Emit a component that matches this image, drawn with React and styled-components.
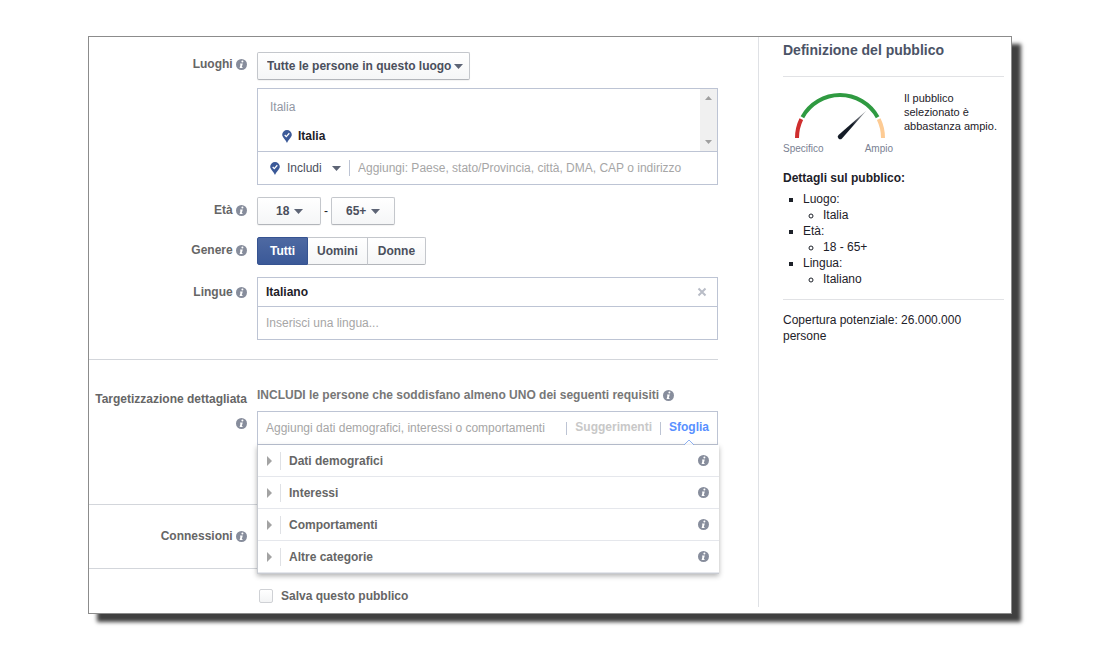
import React, { useState } from 'react';
import styled, { createGlobalStyle, css } from 'styled-components';

const GlobalStyle = createGlobalStyle`
  * {
    box-sizing: border-box;
  }
  body {
    margin: 0;
    background: #fff;
    color: #1d2129;
    font-family: "Liberation Sans", Arial, sans-serif;
    font-size: 12px;
    line-height: 16px;
  }
  button, input, select {
    font-family: inherit;
    font-size: 12px;
  }
  svg {
    display: block;
  }
`;

const Page = styled.div`
  padding: 36px 88px;
`;

const Panel = styled.div`
  display: flex;
  border: 1px solid #8c8c8c;
  background: #fff;
  box-shadow: 9px 8px 4px #404040;
`;

const Main = styled.form`
  flex: 1;
  min-width: 0;
  margin-right: 40px;
`;

const Section = styled.section`
  display: flex;
  flex-direction: column;
  gap: 12px;
  padding: ${p => p.$pad};
  border-bottom: ${p => (p.$last ? 'none' : '1px solid #d3d6db')};
`;

const Row = styled.div`
  display: grid;
  grid-template-columns: 158px minmax(0, 1fr);
  column-gap: 10px;
  align-items: start;
`;

const RowLabel = styled.label`
  padding-top: ${p => p.$top || 0}px;
  color: #666;
  font-weight: bold;
  line-height: 24px;
  text-align: right;

  svg {
    display: inline-block;
    vertical-align: -2px;
  }
`;

const Stack = styled.div`
  display: flex;
  flex-direction: column;
  align-items: flex-start;
  gap: 8px;
`;

const Inline = styled.div`
  display: flex;
  align-items: center;
  gap: 3px;
`;

const raised = css`
  height: 28px;
  border: 1px solid #c4c7cc;
  border-bottom-color: #b2b5ba;
  background: linear-gradient(#fff, #f5f6f7);
  color: #4b4f5c;
  font-weight: bold;
`;

const SelectWrap = styled.div`
  display: inline-grid;
  align-items: center;
  color: #5d6475;

  > * {
    grid-area: 1 / 1;
  }
  svg {
    justify-self: end;
    margin-right: ${p => p.$arrow}px;
    pointer-events: none;
  }
`;

const Select = styled.select`
  ${raised}
  width: ${p => p.$width}px;
  padding: 0 ${p => p.$pad}px;
  border-radius: 2px;
  appearance: none;
  box-shadow: 0 1px 1px rgba(0, 0, 0, 0.05);
`;

const Segments = styled.div`
  display: flex;
`;

const Segment = styled.button`
  ${raised}
  padding: 0 9px;
  border-left-width: 0;

  &:first-child {
    padding: 0 12px;
    border-radius: 2px 0 0 2px;
    border-left-width: 1px;
  }
  &:last-child {
    padding: 0 10px;
    border-radius: 0 2px 2px 0;
  }
  ${p => p.$on && css`
    border-color: #365391;
    background: linear-gradient(#4e69a2, #3b5998);
    color: #fff;
  `}
`;

const Box = styled.div`
  position: relative;
  width: 100%;
  border: 1px solid #bdc4d4;
  background: #fff;
`;

const PlaceList = styled.div`
  display: flex;
  justify-content: space-between;
  height: 62px;
`;

const Places = styled.div`
  padding: 10px 12px;
  color: #9197a3;
`;

const Place = styled.div`
  display: flex;
  align-items: center;
  gap: 6px;
  margin: 13px 0 0 12px;
  color: #1d2129;
  font-weight: bold;
`;

const ScrollBar = styled.div`
  display: flex;
  flex-direction: column;
  justify-content: space-between;
  width: 17px;
  background: #f0f0f0;
`;

const ScrollButton = styled.button`
  display: flex;
  align-items: center;
  justify-content: center;
  height: 18px;
  padding: 0;
  border: 0;
  background: none;
  color: #a0a0a0;
`;

const InputRow = styled.div`
  display: flex;
  align-items: center;
  height: ${p => (p.$divided ? 33 : 32)}px;
  padding: 0 8px;
  border-top: ${p => (p.$divided ? '1px solid #bdc4d4' : 'none')};
`;

const TextInput = styled.input`
  flex: 1;
  min-width: 0;
  height: 24px;
  padding: 0;
  border: 0;
  outline: 0;
  background: none;
  color: #1d2129;

  &::placeholder {
    color: #a6a6a6;
    opacity: 1;
  }
`;

const PinSlot = styled.span`
  margin-left: 4px;
`;

const IncludeWrap = styled(SelectWrap)`
  margin-left: 7px;

  svg {
    margin: 0;
  }
`;

const IncludeSelect = styled.select`
  width: 54px;
  padding: 0;
  border: 0;
  background: none;
  color: #4b4f5c;
  appearance: none;
`;

const Separator = styled.span`
  flex: none;
  width: 1px;
  height: ${p => p.$height || 13}px;
  margin: 0 8px;
  background: ${p => p.$color || '#bdc4d4'};
`;

const Token = styled.div`
  display: flex;
  align-items: center;
  justify-content: space-between;
  height: 28px;
  padding: 0 10px 0 8px;
  font-weight: bold;
`;

const IconButton = styled.button`
  padding: 0;
  border: 0;
  background: none;
  color: #b9bdc7;
`;

const Hint = styled.div`
  display: flex;
  align-items: center;
  gap: 4px;
  color: #777;
  font-weight: bold;
`;

const TabLink = styled.a`
  position: relative;
  padding-bottom: 2px;
  color: ${p => (p.$on ? '#5890ff' : '#c8c8c8')};
  font-weight: bold;
  text-decoration: none;

  svg {
    position: absolute;
    top: 20px;
    left: 50%;
    margin-left: -6px;
  }
`;

/* opens over the sections below the search box */
const Menu = styled.ul`
  position: absolute;
  z-index: 1;
  top: calc(100% + 1px);
  left: -1px;
  right: -2px;
  margin: 0;
  padding: 0;
  list-style: none;
  border: 1px solid #c8cbd1;
  border-width: 0 0 1px 1px;
  background: #fff;
  box-shadow: 0 2px 5px rgba(0, 0, 0, 0.3);
`;

const MenuItem = styled.li`
  display: flex;
  align-items: center;
  height: 32px;
  padding: 0 10px 0 9px;
  border-bottom: 1px solid #e5e7ec;
  color: #666;
  font-weight: bold;

  > svg:first-child {
    color: #a3a3a3;
  }
  > svg:last-child {
    margin-left: auto;
  }
`;

const SaveLabel = styled.label`
  display: flex;
  align-items: center;
  gap: 8px;
  margin-left: 170px;
  color: #666;
  font-weight: bold;
`;

const Check = styled.input`
  appearance: none;
  width: 14px;
  height: 14px;
  margin: 0;
  border: 1px solid #cfd1d5;
  border-radius: 2px;
  background: linear-gradient(#fff, #f3f4f5);

  &:checked {
    background: #4e69a2;
  }
`;

const Side = styled.aside`
  width: 253px;
  margin-bottom: 6px;
  padding: 4px 7px 0 24px;
  border-left: 1px solid #dfe1e5;
`;

const SideTitle = styled.h2`
  margin: 0;
  padding-bottom: 17px;
  border-bottom: 1px solid #e1e2e5;
  color: #4b5366;
  font-size: 14px;
  line-height: 18px;
`;

const Meter = styled.div`
  display: flex;
  align-items: flex-start;
  gap: 11px;
  padding: 14px 0 13px;
`;

const GaugeBox = styled.div`
  flex: none;
  width: 110px;

  svg {
    margin-left: 12px;
  }
`;

const GaugeEnds = styled.div`
  display: flex;
  justify-content: space-between;
  color: #7a8193;
  font-size: 10px;
  line-height: 16px;
`;

const MeterText = styled.p`
  margin: 0;
  font-size: 11px;
  line-height: 14px;
`;

const Details = styled.div`
  padding-bottom: 12px;
  border-bottom: 1px solid #e1e2e5;

  h3 {
    margin: 0 0 5px;
    font-size: 12px;
  }
  ul {
    margin: 0;
    padding-left: 20px;
    list-style: square;
  }
  ul ul {
    list-style: circle;
  }
`;

const Reach = styled.p`
  margin: 12px 0 0;
`;

const Info = () => (
  <svg width="11" height="11" viewBox="0 0 11 11" aria-hidden="true">
    <circle cx="5.5" cy="5.5" r="5.5" fill="#878d9c" />
    <circle cx="6.4" cy="2.5" r="1" fill="#fff" />
    <path d="M4.2 4.6h2.600L5.800 8h.8l-.2.900H3.600L4.500 5.500H4z" fill="#fff" />
  </svg>
);

const Pin = () => (
  <svg width="10" height="13" viewBox="0 0 10 13" aria-hidden="true">
    <path d="M5 0a4.800 4.800 0 0 1 4.800 4.800C9.800 7.300 6.500 9.500 5 13 3.500 9.500.2 7.300.2 4.800A4.800 4.800 0 0 1 5 0z" fill="#3b5998" />
    <path d="M2.700 5l1.600 1.600 3-3.300" fill="none" stroke="#fff" strokeWidth="1.3" />
  </svg>
);

const Down = () => (
  <svg width="9" height="5" viewBox="0 0 9 5" aria-hidden="true">
    <path d="M0 0h9L4.500 5z" fill="currentColor" />
  </svg>
);

const ScrollArrow = ({ up }) => (
  <svg width="7" height="4" viewBox="0 0 7 4" aria-hidden="true">
    <path d={up ? 'M0 4h7L3.500 0z' : 'M0 0h7L3.500 4z'} fill="currentColor" />
  </svg>
);

const Right = () => (
  <svg width="5" height="10" viewBox="0 0 5 10" aria-hidden="true">
    <path d="M0 0l5 5-5 5z" fill="currentColor" />
  </svg>
);

const Gauge = () => (
  <svg width="90" height="50" viewBox="0 -2 90 50" aria-hidden="true">
    <defs>
      <linearGradient id="needle" x1="0" y1="1" x2="1" y2="0">
        <stop offset="0.5" stopColor="#141b26" />
        <stop offset="1" stopColor="#141b26" stopOpacity="0.3" />
      </linearGradient>
    </defs>
    <g fill="none" strokeWidth="4">
      <path d="M2 45A43 43 0 0 1 6.300 26.200" stroke="#cf2e2e" />
      <path d="M7.400 24.200A43 43 0 0 1 82.600 24.200" stroke="#2f9a41" />
      <path d="M83.700 26.200A43 43 0 0 1 88 45" stroke="#fdcb94" />
    </g>
    <path d="M43.500 42L71.500 17.500 47 45.500a2.300 2.300 0 0 1-3.500-3.500z" fill="url(#needle)" />
  </svg>
);

const categories = ['Dati demografici', 'Interessi', 'Comportamenti', 'Altre categorie'];
const genders = ['Tutti', 'Uomini', 'Donne'];

export default function App() {
  const [gender, setGender] = useState('Tutti');

  return (
    <Page>
      <GlobalStyle />
      <Panel>
        <Main>
          <Section $pad="15px 0 19px">
            <Row>
              <RowLabel htmlFor="places">Luoghi <Info /></RowLabel>
              <Stack>
                <SelectWrap $arrow={7}>
                  <Select id="places" $width={213} $pad={9}>
                    <option>Tutte le persone in questo luogo</option>
                  </Select>
                  <Down />
                </SelectWrap>
                <Box>
                  <PlaceList>
                    <Places>
                      Italia
                      <Place><Pin />Italia</Place>
                    </Places>
                    <ScrollBar>
                      <ScrollButton type="button" aria-label="Su"><ScrollArrow up /></ScrollButton>
                      <ScrollButton type="button" aria-label="Giù"><ScrollArrow /></ScrollButton>
                    </ScrollBar>
                  </PlaceList>
                  <InputRow $divided>
                    <PinSlot><Pin /></PinSlot>
                    <IncludeWrap>
                      <IncludeSelect aria-label="Includi o escludi">
                        <option>Includi</option>
                      </IncludeSelect>
                      <Down />
                    </IncludeWrap>
                    <Separator $height={16} />
                    <TextInput
                      aria-label="Aggiungi luogo"
                      placeholder="Aggiungi: Paese, stato/Provincia, città, DMA, CAP o indirizzo"
                    />
                  </InputRow>
                </Box>
              </Stack>
            </Row>

            <Row>
              <RowLabel htmlFor="age-min" $top={1}>Età <Info /></RowLabel>
              <Inline>
                <SelectWrap $arrow={18}>
                  <Select id="age-min" $width={64} $pad={18}>
                    <option>18</option>
                  </Select>
                  <Down />
                </SelectWrap>
                -
                <SelectWrap $arrow={15}>
                  <Select aria-label="Età massima" $width={64} $pad={14}>
                    <option>65+</option>
                  </Select>
                  <Down />
                </SelectWrap>
              </Inline>
            </Row>

            <Row>
              <RowLabel as="span" id="gender" $top={1}>Genere <Info /></RowLabel>
              <Segments role="group" aria-labelledby="gender">
                {genders.map(g => (
                  <Segment
                    key={g}
                    type="button"
                    $on={g === gender}
                    aria-pressed={g === gender}
                    onClick={() => setGender(g)}
                  >
                    {g}
                  </Segment>
                ))}
              </Segments>
            </Row>

            <Row>
              <RowLabel htmlFor="language" $top={3}>Lingue <Info /></RowLabel>
              <Box>
                <Token>
                  Italiano
                  <IconButton type="button" aria-label="Rimuovi">
                    <svg width="10" height="10" viewBox="0 0 10 10">
                      <path d="M1.500 1.500l7 7M8.500 1.500l-7 7" stroke="currentColor" strokeWidth="2" />
                    </svg>
                  </IconButton>
                </Token>
                <InputRow $divided>
                  <TextInput id="language" placeholder="Inserisci una lingua..." />
                </InputRow>
              </Box>
            </Row>
          </Section>

          <Section $pad="27px 0 59px">
            <Row>
              <RowLabel htmlFor="targeting">Targetizzazione dettagliata <Info /></RowLabel>
              <Stack>
                <Hint>INCLUDI le persone che soddisfano almeno UNO dei seguenti requisiti <Info /></Hint>
                <Box>
                  <InputRow>
                    <TextInput
                      id="targeting"
                      placeholder="Aggiungi dati demografici, interessi o comportamenti"
                    />
                    <Separator />
                    <TabLink href="#suggerimenti">Suggerimenti</TabLink>
                    <Separator />
                    <TabLink href="#sfoglia" $on>
                      Sfoglia
                      <svg width="12" height="6" viewBox="0 0 12 6" aria-hidden="true">
                        <path d="M1 6l5-5 5 5" fill="#fff" stroke="#8fb3f5" />
                      </svg>
                    </TabLink>
                  </InputRow>
                  <Menu>
                    {categories.map(c => (
                      <MenuItem key={c}>
                        <Right />
                        <Separator $height={18} $color="#dfe1e5" />
                        {c}
                        <Info />
                      </MenuItem>
                    ))}
                  </Menu>
                </Box>
              </Stack>
            </Row>
          </Section>

          <Section $pad="18px 0 20px">
            <Row>
              <RowLabel as="span" $top={1}>Connessioni <Info /></RowLabel>
            </Row>
          </Section>

          <Section $pad="19px 0 9px" $last>
            <SaveLabel>
              <Check type="checkbox" />
              Salva questo pubblico
            </SaveLabel>
          </Section>
        </Main>

        <Side>
          <SideTitle>Definizione del pubblico</SideTitle>
          <Meter>
            <GaugeBox>
              <Gauge />
              <GaugeEnds>
                <span>Specifico</span>
                <span>Ampio</span>
              </GaugeEnds>
            </GaugeBox>
            <MeterText>Il pubblico selezionato è abbastanza ampio.</MeterText>
          </Meter>
          <Details>
            <h3>Dettagli sul pubblico:</h3>
            <ul>
              <li>Luogo:<ul><li>Italia</li></ul></li>
              <li>Età:<ul><li>18 - 65+</li></ul></li>
              <li>Lingua:<ul><li>Italiano</li></ul></li>
            </ul>
          </Details>
          <Reach>Copertura potenziale: 26.000.000 persone</Reach>
        </Side>
      </Panel>
    </Page>
  );
}
